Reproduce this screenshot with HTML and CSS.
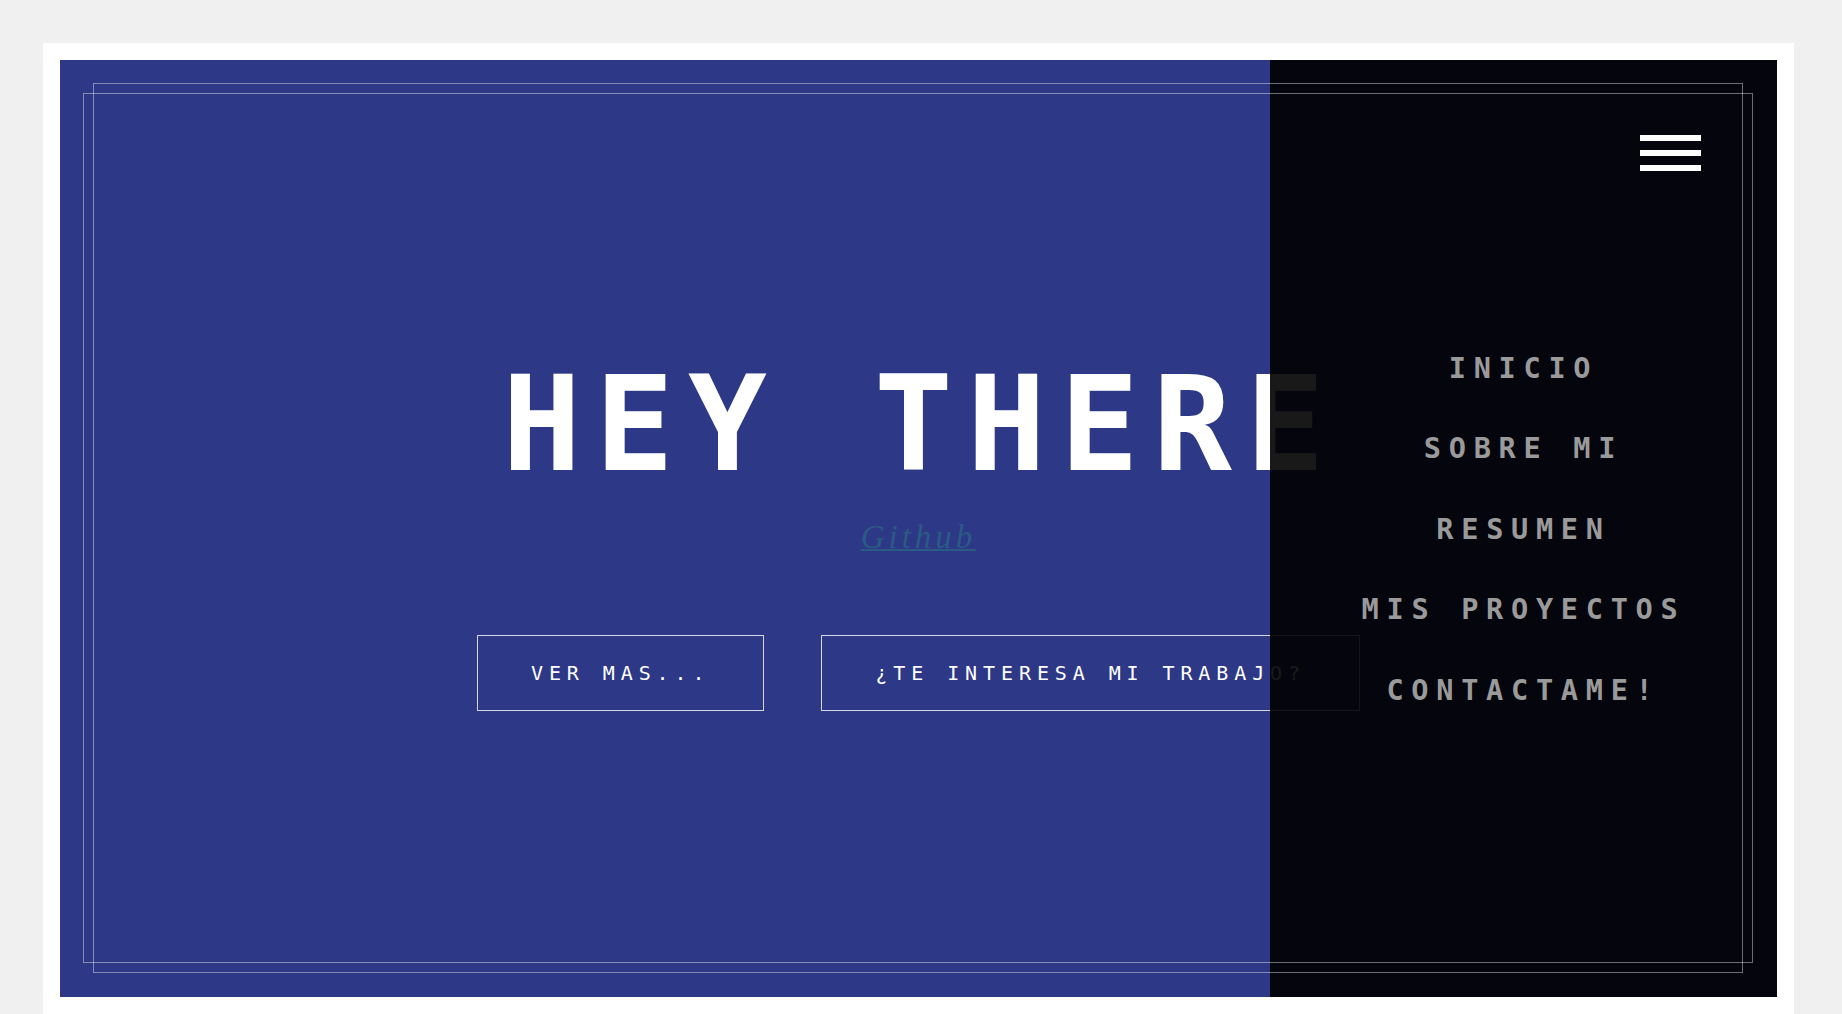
FILE: index.html
```html
<!DOCTYPE html>
<html lang="es">
<head>
<meta charset="utf-8">
<title>Hey there</title>
<link rel="stylesheet" href="styles.css">
</head>
<body>
<div class="frame">
  <section class="hero">
    <div class="hero-content">
      <h1 class="title">HEY THERE</h1>
      <a class="github" href="#">Github</a>
      <div class="actions">
        <a class="btn" href="#">VER MAS...</a>
        <a class="btn" href="#">¿TE INTERESA MI TRABAJO?</a>
      </div>
    </div>
    <nav class="menu">
      <a class="menu-item" href="#">INICIO</a>
      <a class="menu-item" href="#">SOBRE MI</a>
      <a class="menu-item" href="#">RESUMEN</a>
      <a class="menu-item" href="#">MIS PROYECTOS</a>
      <a class="menu-item" href="#">CONTACTAME!</a>
    </nav>
    <div class="line line-a"></div>
    <div class="line line-b"></div>
    <button class="burger" aria-label="menu">
      <span class="bar"></span><span class="bar"></span><span class="bar"></span>
    </button>
  </section>
</div>
</body>
</html>
```

FILE: styles.css
```css
html, body {
  margin: 0;
  padding: 0;
}
body {
  background: #f0f0f0;
  overflow: hidden;
  font-family: "DejaVu Sans Mono", monospace;
}
.frame {
  margin: 43px 0 0 43px;
  width: 1717px;
  padding: 17px;
  background: #ffffff;
}
.hero {
  position: relative;
  width: 1717px;
  height: 937px;
  background: #2d3886;
  overflow: hidden;
  display: flex;
  flex-direction: column;
  justify-content: center;
  align-items: center;
  padding-top: 11px;
  box-sizing: border-box;
}
.hero-content {
  display: flex;
  flex-direction: column;
  align-items: center;
}
.title {
  margin: 2px 0 0;
  padding-left: 4px;
  font-family: "DejaVu Sans Mono", monospace;
  font-weight: bold;
  font-size: 131px;
  line-height: 131px;
  letter-spacing: 14.1px;
  color: #ffffff;
  white-space: nowrap;
}
.github {
  margin-top: 28px;
  font-family: "Liberation Serif", serif;
  font-style: italic;
  font-size: 33px;
  line-height: 38px;
  letter-spacing: 4px;
  color: #2a5b84;
  text-decoration: underline;
  text-decoration-thickness: 2px;
}
.actions {
  margin-top: 79px;
  display: flex;
  gap: 57px;
}
.btn {
  display: block;
  padding: 25px 53px;
  border: 1px solid rgba(255, 255, 255, 0.8);
  font-family: "DejaVu Sans Mono", monospace;
  font-size: 20px;
  line-height: 24px;
  letter-spacing: 5.9px;
  color: #ffffff;
  text-decoration: none;
  white-space: nowrap;
}
.menu {
  position: absolute;
  top: 0;
  right: 0;
  bottom: 0;
  width: 507px;
  padding-top: 1px;
  box-sizing: border-box;
  background: rgba(0, 0, 0, 0.9);
  display: flex;
  flex-direction: column;
  justify-content: center;
  align-items: center;
}
.menu-item {
  font-family: "DejaVu Sans Mono", monospace;
  font-weight: bold;
  font-size: 28.6px;
  line-height: 80.4px;
  letter-spacing: 7.7px;
  color: #9a9a9a;
  text-decoration: none;
  white-space: nowrap;
}
.line {
  position: absolute;
  border: 1px solid rgba(255, 255, 255, 0.42);
  pointer-events: none;
}
.line-a {
  top: 23px;
  left: 33px;
  right: 34px;
  bottom: 24px;
}
.line-b {
  top: 33px;
  left: 23px;
  right: 24px;
  bottom: 34px;
}
.burger {
  position: absolute;
  top: 75px;
  right: 76px;
  width: 61px;
  padding: 0;
  border: 0;
  background: none;
  display: flex;
  flex-direction: column;
  gap: 9px;
}
.bar {
  display: block;
  width: 61px;
  height: 6px;
  background: #ffffff;
}
```
